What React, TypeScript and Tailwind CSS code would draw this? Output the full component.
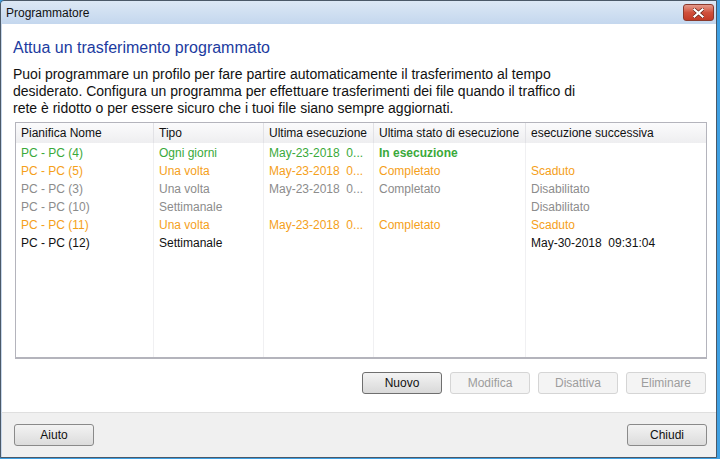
const rows = [
  { name: "PC - PC (4)", tipo: "Ogni giorni", last: "May-23-2018  0...", stato: "In esecuzione", next: "", color: "text-[#3aa93a]", bold: true },
  { name: "PC - PC (5)", tipo: "Una volta", last: "May-23-2018  0...", stato: "Completato", next: "Scaduto", color: "text-[#f5a01a]" },
  { name: "PC - PC (3)", tipo: "Una volta", last: "May-23-2018  0...", stato: "Completato", next: "Disabilitato", color: "text-[#8c8c8c]" },
  { name: "PC - PC (10)", tipo: "Settimanale", last: "", stato: "", next: "Disabilitato", color: "text-[#8c8c8c]" },
  { name: "PC - PC (11)", tipo: "Una volta", last: "May-23-2018  0...", stato: "Completato", next: "Scaduto", color: "text-[#f5a01a]" },
  { name: "PC - PC (12)", tipo: "Settimanale", last: "", stato: "", next: "May-30-2018  09:31:04", color: "text-[#111]" },
];

const cols = "grid grid-cols-[138px_110px_110px_152px_1fr]";

const Button = ({ label, disabled, primary }: { label: string; disabled?: boolean; primary?: boolean }) => (
  <div
    className={
      "w-[80px] h-[22px] flex items-center justify-center rounded-[3px] border text-[12px] " +
      (disabled
        ? "border-[#d5d5d5] bg-[#f4f4f4] text-[#9d9d9d]"
        : primary
        ? "border-[#6f6f6f] bg-gradient-to-b from-[#f3f3f3] to-[#d9d9d9] text-[#111]"
        : "border-[#8a8a8a] bg-gradient-to-b from-[#f3f3f3] to-[#dcdcdc] text-[#111]")
    }
  >
    {label}
  </div>
);

export default function App() {
  return (
    <div className="w-[720px] h-[459px] overflow-hidden bg-[#3fa0e2] font-['Liberation_Sans',Arial,sans-serif]">
      <div className="w-[717px] h-[458px] flex flex-col border border-[#4b5968] rounded-tl-[4px] overflow-hidden">
        {/* Title bar */}
        <div className="h-[23px] shrink-0 flex items-center justify-between pl-[5px] pr-[2px] bg-gradient-to-b from-[#dce8f5] to-[#c4d7ee]">
          <span className="text-[12px] text-[#111]">Programmatore</span>
          <div className="w-[31px] h-[17px] flex items-center justify-center rounded-[3px] border border-[#8a3a2e] bg-gradient-to-b from-[#e49a8c] via-[#d0503c] to-[#c23a26]">
            <svg width="11" height="10" viewBox="0 0 11 10">
              <path d="M1.5 1.5 L9.5 8.5 M9.5 1.5 L1.5 8.5" stroke="#5a1a10" strokeWidth="3.4" strokeLinecap="square" />
              <path d="M1.5 1.5 L9.5 8.5 M9.5 1.5 L1.5 8.5" stroke="#ffffff" strokeWidth="2.2" strokeLinecap="square" />
            </svg>
          </div>
        </div>

        {/* Content */}
        <div className="flex-1 bg-white border-l border-[#c6d7ec] pl-[11px] pr-[9px] pt-[13px] flex flex-col">
          <div className="text-[16px] leading-[22px] text-[#1c3ba0]">Attua un trasferimento programmato</div>
          <p className="mt-[7px] text-[14px] leading-[17px] text-[#111] w-[582px]">
            Puoi programmare un profilo per fare partire automaticamente il trasferimento al tempo desiderato. Configura un
            programma per effettuare trasferimenti dei file quando il traffico di rete è ridotto o per essere sicuro che i
            tuoi file siano sempre aggiornati.
          </p>

          {/* Table */}
          <div className="mt-[5px] ml-[2px] h-[237px] border border-[#b4b4bc] border-b-2 flex flex-col text-[12px]">
            <div className={cols + " h-[20px] shrink-0 bg-gradient-to-b from-[#fbfbfc] to-[#eeeef0] text-[#111]"}>
              <div className="pl-[5px] flex items-center border-r border-[#e2e2e6]">Pianifica Nome</div>
              <div className="pl-[5px] flex items-center border-r border-[#e2e2e6]">Tipo</div>
              <div className="pl-[5px] flex items-center border-r border-[#e2e2e6]">Ultima esecuzione</div>
              <div className="pl-[5px] flex items-center border-r border-[#e2e2e6]">Ultima stato di esecuzione</div>
              <div className="pl-[5px] flex items-center">esecuzione successiva</div>
            </div>
            <div className={cols + " flex-1"}>
              {[0, 1, 2, 3, 4].map((c) => (
                <div key={c} className={"pt-[1px] flex flex-col " + (c < 4 ? "border-r border-[#f0f0f2]" : "")}>
                  {rows.map((r, i) => {
                    const v = [r.name, r.tipo, r.last, r.stato, r.next][c];
                    return (
                      <div
                        key={i}
                        className={
                          "h-[18px] flex items-center pl-[5px] whitespace-pre " +
                          r.color +
                          (r.bold && c === 3 ? " font-bold" : "")
                        }
                      >
                        {v}
                      </div>
                    );
                  })}
                </div>
              ))}
            </div>
          </div>

          <div className="mt-[13px] flex justify-end gap-[8px] pr-[1px]">
            <Button label="Nuovo" primary />
            <Button label="Modifica" disabled />
            <Button label="Disattiva" disabled />
            <Button label="Eliminare" disabled />
          </div>
        </div>

        {/* Footer */}
        <div className="h-[45px] shrink-0 bg-[#f0f0f0] border-t border-[#dfdfdf] border-l border-l-[#c6d7ec] flex items-center justify-between pl-[12px] pr-[9px]">
          <Button label="Aiuto" />
          <Button label="Chiudi" />
        </div>
      </div>
    </div>
  );
}
